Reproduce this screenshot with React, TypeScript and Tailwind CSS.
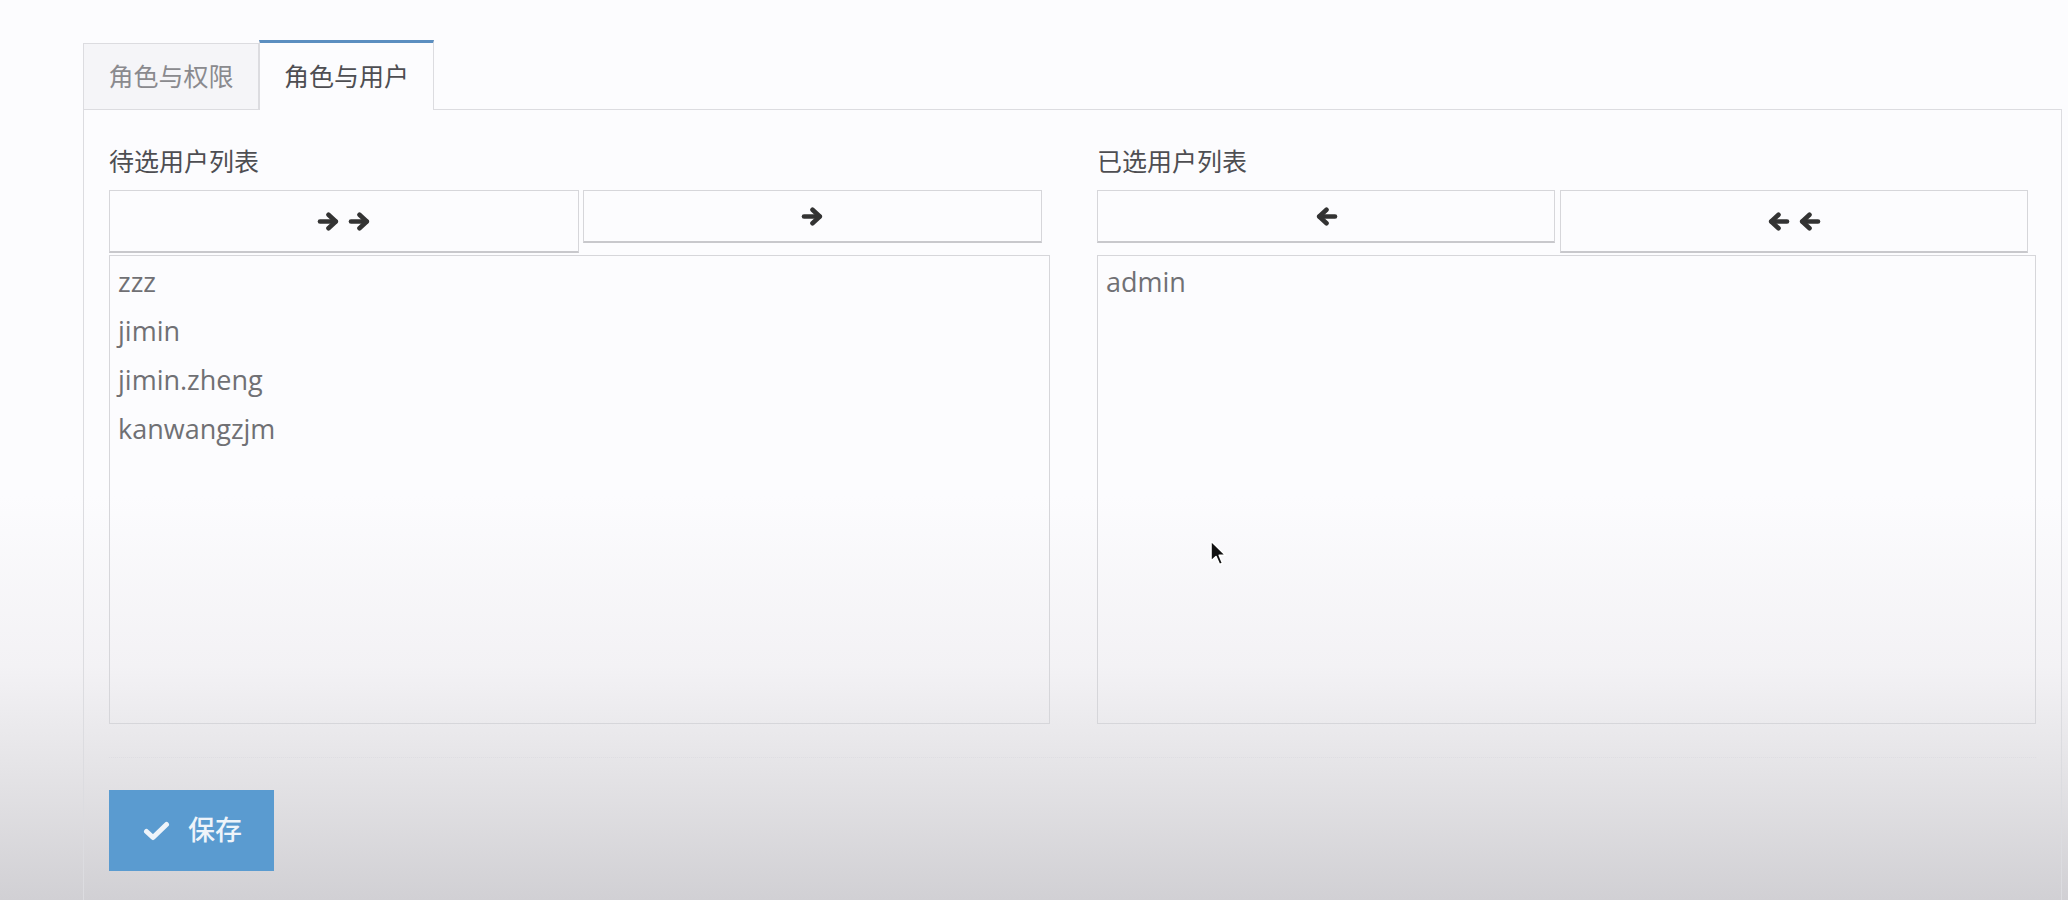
import React from "react";

const FONT = { fontFamily: '"Open Sans", "Noto Sans CJK SC", sans-serif' };

function ArrowRight() {
  return (
    <svg width="23" height="19" viewBox="0 0 23 19" fill="none" stroke="#333" strokeWidth="4.6" strokeLinecap="round" strokeLinejoin="round">
      <path d="M3 9.5 H18.5" />
      <path d="M11.5 2.8 L18.8 9.5 L11.5 16.2" />
    </svg>
  );
}

function ArrowLeft() {
  return (
    <svg width="23" height="19" viewBox="0 0 23 19" fill="none" stroke="#333" strokeWidth="4.6" strokeLinecap="round" strokeLinejoin="round">
      <path d="M20 9.5 H4.5" />
      <path d="M11.5 2.8 L4.2 9.5 L11.5 16.2" />
    </svg>
  );
}

function Cursor() {
  return (
    <svg width="20" height="28" viewBox="0 0 20 28" className="absolute left-[1209px] top-[539px] pointer-events-none">
      <path d="M2 2 L2 22 L7 17.5 L10.5 25.5 L13.5 24.2 L10.2 16.3 L16.8 16.3 Z" fill="#111" stroke="#fff" strokeWidth="1.6" strokeLinejoin="round" />
    </svg>
  );
}

export default function App() {
  const left = ["zzz", "jimin", "jimin.zheng", "kanwangzjm"];
  const right = ["admin"];
  return (
    <div
      className="relative h-[900px] w-[2068px] overflow-hidden bg-[linear-gradient(to_bottom,#fcfcfe_0%,#fcfcfe_55%,#f3f2f5_74%,#e4e3e6_86%,#d1d0d4_100%)] pl-[83px] pr-[6px] pt-[40px] flex flex-col"
      style={FONT}
    >
      {/* Tabs */}
      <div className="flex items-end h-[69px] relative z-10">
        <div className="w-[176px] h-[66px] border border-b-0 border-[#dcdce0] bg-[#f5f5f8] flex items-center justify-center text-[25px] text-[#8a8a8e]">
          角色与权限
        </div>
        <div className="w-[175px] h-[70px] -mb-px border-x border-[#dcdce0] border-t-[3px] border-t-[#5b8ec0] bg-[#fcfcfe] flex items-center justify-center text-[25px] text-[#4e4e52]">
          角色与用户
        </div>
      </div>
      {/* Panel */}
      <div className="flex-1 border-x border-t border-[#dcdce0] px-[25px]">
        <div className="grid grid-cols-[941px_939px] gap-x-[47px]">
          {/* Left column */}
          <div className="flex flex-col">
            <div className="mt-[33px] h-[36px] leading-[36px] text-[25px] text-[#4e4e52]">待选用户列表</div>
            <div className="mt-[11px] flex items-start gap-[4px] h-[63px]">
              <button className="w-[470px] h-[63px] border border-[#d6d6da] border-b-[#c8c8cc] border-b-2 flex items-center justify-center gap-[8px]">
                <ArrowRight />
                <ArrowRight />
              </button>
              <button className="w-[459px] h-[53px] border border-[#d6d6da] border-b-[#c8c8cc] border-b-2 flex items-center justify-center">
                <ArrowRight />
              </button>
            </div>
            <div className="mt-[2px] h-[469px] border border-[#d6d6da] pl-[8px] pt-[1px]">
              {left.map((u) => (
                <div key={u} className="h-[49px] leading-[49px] text-[27px] text-[#707074]">
                  {u}
                </div>
              ))}
            </div>
          </div>
          {/* Right column */}
          <div className="flex flex-col">
            <div className="mt-[33px] h-[36px] leading-[36px] text-[25px] text-[#4e4e52]">已选用户列表</div>
            <div className="mt-[11px] flex items-start gap-[5px] h-[63px]">
              <button className="w-[458px] h-[53px] border border-[#d6d6da] border-b-[#c8c8cc] border-b-2 flex items-center justify-center">
                <ArrowLeft />
              </button>
              <button className="w-[468px] h-[63px] border border-[#d6d6da] border-b-[#c8c8cc] border-b-2 flex items-center justify-center gap-[8px]">
                <ArrowLeft />
                <ArrowLeft />
              </button>
            </div>
            <div className="mt-[2px] h-[469px] border border-[#d6d6da] pl-[8px] pt-[1px]">
              {right.map((u) => (
                <div key={u} className="h-[49px] leading-[49px] text-[27px] text-[#707074]">
                  {u}
                </div>
              ))}
            </div>
          </div>
        </div>
        <div className="mt-[33px] border-t border-dotted border-[#dedde2]" />
        <button className="mt-[32px] w-[165px] h-[81px] bg-[#5a9bd0] flex items-center pl-[34px] gap-[18px] text-[27px] font-medium text-[#eef4fa]">
          <svg width="27" height="20" viewBox="0 0 27 20" fill="none" stroke="#eef4fa" strokeWidth="5" strokeLinecap="round" strokeLinejoin="round">
            <path d="M3.5 10.5 L10 16.5 L23.5 3.5" />
          </svg>
          <span>保存</span>
        </button>
      </div>
      <Cursor />
    </div>
  );
}
